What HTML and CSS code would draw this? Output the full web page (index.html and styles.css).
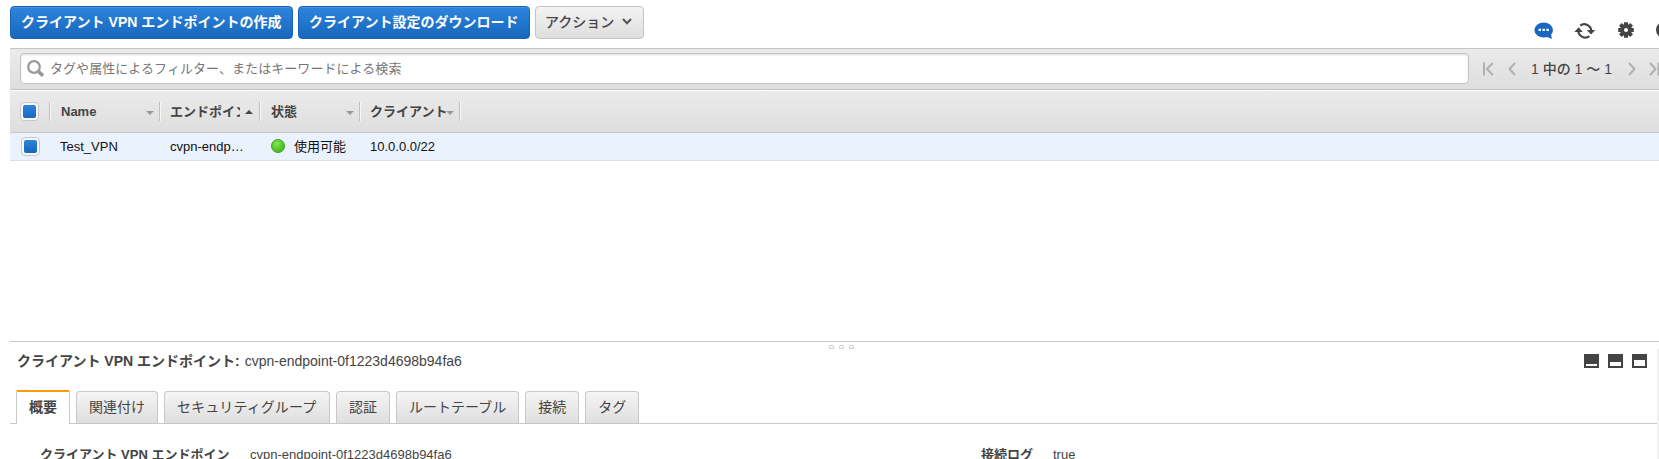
FILE: index.html
```html
<!DOCTYPE html>
<html lang="ja">
<head>
<meta charset="utf-8">
<title>クライアント VPN エンドポイント</title>
<link rel="stylesheet" href="styles.css">
</head>
<body>
<div class="console">
  <header class="actions">
    <button class="btn primary create">クライアント VPN エンドポイントの作成</button>
    <button class="btn primary download">クライアント設定のダウンロード</button>
    <button class="btn menu"><span>アクション</span><svg width="10" height="8" viewBox="0 0 10 8"><path d="M1 1 5 5.200 9 1" fill="none" stroke="#555" stroke-width="2"/></svg></button>
    <div class="tools">
      <svg class="chat" width="20" height="18" viewBox="0 0 20 18"><ellipse cx="9.700" cy="8" rx="9.300" ry="7.600" fill="#1b66c0"/><path d="M11 14 17.800 16.900 17 11Z" fill="#1b66c0"/><path d="M4.600 6.800h2.400v2.200H4.600zM8.500 6.800h2.400v2.200H8.500zM12.400 6.800h2.400v2.200h-2.400z" fill="#fff"/></svg>
      <svg class="refresh" width="22" height="18" viewBox="0 0 22 18"><g fill="none" stroke="#444" stroke-width="2.200"><path d="M6.200 3.600A7 7 0 0 1 17.300 8.800"/><path d="M15.400 14.200A7 7 0 0 1 4.300 9"/></g><path d="M12.800 7.900H21.200L17 12.500ZM.4 9.900H8.800L4.600 5.300Z" fill="#444"/></svg>
      <svg class="gear" width="16" height="16" viewBox="0 0 16 16"><g stroke="#444" stroke-width="4"><path d="M8 .2V15.800M.2 8H15.800M2.400 2.400 13.600 13.600M13.600 2.400 2.400 13.600"/></g><circle cx="8" cy="8" r="6" fill="#444"/><circle cx="8" cy="8" r="2" fill="#fff"/></svg>
      <svg class="help" width="16" height="16" viewBox="0 0 16 16"><circle cx="8" cy="8" r="8" fill="#444"/></svg>
    </div>
  </header>

  <div class="filter">
    <div class="search">
      <svg width="18" height="18" viewBox="0 0 18 18"><circle cx="7" cy="7" r="5.800" fill="none" stroke="#999" stroke-width="2.200"/><path d="M11 11 16 15.800" stroke="#999" stroke-width="3.600"/></svg>
      <span>タグや属性によるフィルター、またはキーワードによる検索</span>
    </div>
    <nav class="pager">
      <svg width="11" height="14" viewBox="0 0 11 14"><path d="M1 .5V13.500M9.700 1 4 7 9.700 13" fill="none" stroke="#b0b0b0" stroke-width="2"/></svg>
      <svg class="prev" width="8" height="14" viewBox="0 0 8 14"><path d="M7 1 1.500 7 7 13" fill="none" stroke="#b0b0b0" stroke-width="2"/></svg>
      <span class="range">1 中の 1 ～ 1</span>
      <svg class="next" width="8" height="14" viewBox="0 0 8 14"><path d="M1 1 6.500 7 1 13" fill="none" stroke="#b0b0b0" stroke-width="2"/></svg>
      <svg class="last" width="11" height="14" viewBox="0 0 11 14"><path d="M1 1 6.500 7 1 13M9.500 .5V13.500" fill="none" stroke="#b0b0b0" stroke-width="2"/></svg>
    </nav>
  </div>

  <div class="table">
    <div class="row head">
      <div class="check"><i></i></div>
      <div class="cell"><span>Name</span><b class="down"></b></div>
      <div class="cell"><span class="clipped">エンドポイント</span><b class="up"></b></div>
      <div class="cell"><span>状態</span><b class="down"></b></div>
      <div class="cell"><span class="client">クライアント</span><b class="down"></b></div>
      <div class="cell"></div>
    </div>
    <div class="row data">
      <div class="check"><i></i></div>
      <div class="value">Test_VPN</div>
      <div class="value">cvpn-endp…</div>
      <div class="value"><i class="status"></i>使用可能</div>
      <div class="value">10.0.0.0/22</div>
    </div>
  </div>

  <section class="details">
    <div class="grip"><i></i><i></i><i></i></div>
    <div class="title">
      <strong>クライアント VPN エンドポイント:</strong><span>cvpn-endpoint-0f1223d4698b94fa6</span>
      <div class="layouts"><i class="small"></i><i class="half"></i><i class="full"></i></div>
    </div>
    <div class="body">
      <nav class="tabs">
        <a class="tab active">概要</a>
        <a class="tab">関連付け</a>
        <a class="tab wide">セキュリティグループ</a>
        <a class="tab">認証</a>
        <a class="tab">ルートテーブル</a>
        <a class="tab">接続</a>
        <a class="tab">タグ</a>
      </nav>
      <div class="fields">
        <div class="name">クライアント VPN エンドポイン</div>
        <div>cvpn-endpoint-0f1223d4698b94fa6</div>
        <div class="name">接続ログ</div>
        <div>true</div>
      </div>
    </div>
  </section>
</div>
</body>
</html>
```
FILE: styles.css
```css
* { box-sizing: border-box; }
body {
  margin: 0;
  background: #fff;
  color: #444;
  font: 13px/20px "Liberation Sans", "Noto Sans CJK JP", sans-serif;
}
svg { display: block; flex: none; }
.console {
  display: flex;
  flex-direction: column;
  height: 459px;
  padding-left: 10px;
  overflow: hidden;
}

.actions {
  display: flex;
  flex: none;
  gap: 5px;
  height: 48px;
  padding-top: 6px;
}
.btn {
  flex: none;
  height: 33px;
  padding: 0 0 2px 10px;
  border: 1px solid #c4c4c4;
  border-radius: 4px;
  background: linear-gradient(#f3f3f3, #dedede);
  color: #444;
  font: 14px/20px "Liberation Sans", "Noto Sans CJK JP", sans-serif;
  text-align: left;
  white-space: nowrap;
}
.primary {
  border-color: #1663b8;
  background: linear-gradient(#2e84dc, #1767bd);
  box-shadow: inset 0 1px #4593e0;
  color: #fff;
  font-weight: bold;
}
.create { width: 283px; letter-spacing: .03px; }
.download { width: 232px; }
.menu {
  display: flex;
  align-items: center;
  gap: 8px;
  width: 109px;
  padding-left: 9px;
  font-weight: 500;
}
.tools {
  display: flex;
  flex: none;
  align-items: flex-start;
  margin-left: 885px;
  padding-top: 16px;
}
.refresh { margin-left: 20px; }
.gear { margin-left: 22px; }
.help { margin-left: 22px; }

.filter {
  display: flex;
  flex: none;
  align-items: center;
  height: 42px;
  padding: 0 0 1px 10px;
  border: solid #c4c4c4;
  border-width: 1px 0;
  background: linear-gradient(#ebebeb, #dedede);
}
.search {
  display: flex;
  flex: none;
  align-items: center;
  gap: 5px;
  width: 1449px;
  height: 31px;
  padding-left: 6px;
  border: 1px solid #c4c4c4;
  border-radius: 4px;
  background: #fff;
  box-shadow: inset 0 1px 2px #ddd;
  color: #777;
  letter-spacing: .06px;
}
.pager {
  display: flex;
  flex: none;
  align-items: center;
  padding-left: 14px;
}
.prev { margin-left: 14px; }
.range {
  width: 98px;
  margin-left: 15px;
  font-size: 14px;
  font-weight: 500;
  white-space: nowrap;
}
.next { margin-left: -1px; }
.last { margin-left: 13px; }

.table { flex: none; height: 251px; }
.row {
  display: grid;
  grid-template-columns: 39px 110px 100px 100px 100px 1fr;
  align-items: center;
}
.head {
  height: 43px;
  border-top: 1px solid #fff;
  border-bottom: 1px solid #c8c8c8;
  background: linear-gradient(#ebebeb, #dedede);
  font-weight: bold;
}
.check {
  display: grid;
  place-items: center;
  width: 19px;
  height: 19px;
  margin-left: 10px;
  border: 1px solid #c8c8c8;
  border-radius: 4px;
  background: #f6f6f6;
}
.check i {
  width: 13px;
  height: 13px;
  border-radius: 2px;
  background: linear-gradient(#2e84dc, #1767bd);
}
.cell {
  display: flex;
  align-items: center;
  height: 19px;
  padding: 0 5px 0 11px;
  border-left: 1px solid #c0c0c0;
  box-shadow: inset 1px 0 #f7f7f7;
  white-space: nowrap;
}
.cell .clipped { width: 70px; margin-left: -1px; overflow: hidden; }
.cell .client { width: 76px; margin-left: -1px; overflow: hidden; }
.cell b {
  width: 0;
  height: 0;
  margin-left: auto;
  border: 4px solid transparent;
}
.cell .down { margin-top: 6px; border-top-color: #999; }
.cell .up { margin-top: -3px; border-bottom-color: #444; margin-right: 1px; }
.data {
  height: 28px;
  border-bottom: 1px solid #ddd;
  background: #eaf2fe;
  color: #111;
}
.data .check { margin-left: 11px; }
.value {
  display: flex;
  align-items: center;
  padding-left: 11px;
  white-space: nowrap;
}
.status {
  width: 14px;
  height: 14px;
  margin: 0 9px 1px 1px;
  border: 1px solid #35a317;
  border-radius: 50%;
  background: radial-gradient(circle at 40% 30%, #83e64d, #32ac12);
}

.details {
  flex: none;
  height: 118px;
  border-top: 1px solid #c8c8c8;
}
.grip {
  display: flex;
  justify-content: center;
  gap: 5px;
  height: 7px;
  padding: 3px 0 0 14px;
}
.grip i {
  width: 5px;
  height: 4px;
  border: 1px solid #ccc;
  border-radius: 2px 2px 0 0;
}
.title {
  display: flex;
  align-items: center;
  height: 41px;
  padding: 0 10px 17px 7px;
  border-right: 2px solid #f0f0f0;
  font-size: 14px;
}
.title span { margin-left: 5px; }
.layouts { display: flex; gap: 9px; margin-left: auto; }
.layouts i {
  width: 15px;
  height: 14px;
  border: solid #444;
  border-width: 10px 2px 2px;
}
.layouts .half { border-top-width: 8px; }
.layouts .full { border-top-width: 6px; }
.body { height: 69px; border-right: 2px solid #f0f0f0; }
.tabs {
  display: flex;
  align-items: flex-end;
  gap: 6px;
  height: 34px;
  padding-left: 6px;
  border-bottom: 1px solid #c8c8c8;
}
.tab {
  flex: none;
  height: 32px;
  padding: 5px 12px;
  border: 1px solid #c8c8c8;
  border-bottom: 0;
  border-radius: 4px 4px 0 0;
  background: linear-gradient(#f5f5f5, #dedede);
  font-size: 14px;
  white-space: nowrap;
}
.wide { width: 166px; letter-spacing: .1px; }
.active {
  height: 34px;
  margin-bottom: -1px;
  border-top: 2px solid #f90;
  border-radius: 2px 2px 0 0;
  background: #fff;
  font-weight: bold;
}
.fields {
  display: grid;
  grid-template-columns: 210px 731px 72px 1fr;
  padding: 21px 0 0 30px;
  white-space: nowrap;
}
.name { font-weight: bold; }
```
